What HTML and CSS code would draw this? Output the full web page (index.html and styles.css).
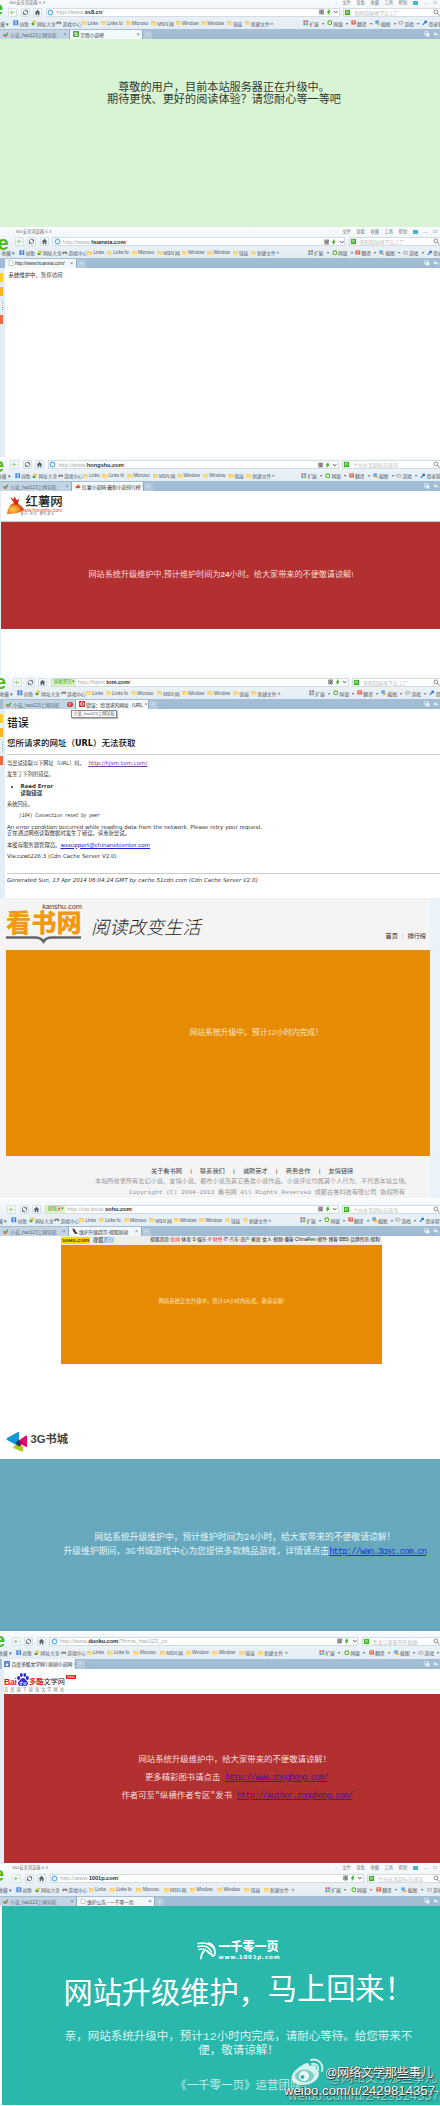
FILE: index.html
```html
<!DOCTYPE html>
<html>
<head>
<meta charset="utf-8">
<title>网站升级维护</title>
<link rel="stylesheet" href="styles.css">
</head>
<body>
<main class="page">

<section class="shot shot-xs8">
  <div class="chrome" data-key="xs8"></div>
  <div class="notice-green">
    <p>尊敬的用户，目前本站服务器正在升级中。</p>
    <p>期待更快、更好的阅读体验？请您耐心等一等吧</p>
  </div>
</section>

<section class="shot shot-huanxia">
  <div class="chrome" data-key="huanxia"></div>
  <div class="with-side">
    <aside class="side"><i class="s1"></i><i class="s2"></i><i class="s3"></i><i class="s4"></i></aside>
    <p class="plain">系统维护中，暂停访问</p>
  </div>
</section>

<section class="shot shot-hongshu">
  <div class="chrome" data-key="hongshu"></div>
  <div class="hs-body">
    <header class="hs-head">
      <svg class="hs-mark" viewBox="0 0 17 18">
        <defs><radialGradient id="yam" cx=".35" cy=".6" r=".7"><stop offset="0" stop-color="#ffd35a"/><stop offset=".5" stop-color="#f08a1c"/><stop offset="1" stop-color="#c81a10"/></radialGradient></defs>
        <path d="M0 17.500C1 10 5 6 9 7c4 1 6 3 8 6-4 4-10 5-17 4.500Z" fill="url(#yam)"/>
        <path d="M8 8 3 1l4 2L7 0l3 4 2-2-1 6Z" fill="#d8271c"/>
      </svg>
      <div class="hs-name">
        <b>红薯网</b>
        <span class="hs-url">www.hongshu.com</span>
        <span class="hs-sub">最 红 · 阅 读 · 最 新 最 全</span>
      </div>
    </header>
    <div class="hs-red"><p>网站系统升级维护中,预计维护时间为<b>24</b>小时。给大家带来的不便敬请谅解!</p></div>
  </div>
</section>

<section class="shot shot-tom">
  <div class="chrome" data-key="tom"></div>
  <div class="with-side">
    <aside class="side"><i class="s1"></i><i class="s2"></i><i class="s3"></i><i class="s4"></i></aside>
    <div class="err">
      <h1>错误</h1>
      <h2>您所请求的网址（<span>URL</span>）无法获取</h2>
      <hr>
      <p class="e1">当尝试读取以下网址（URL）时。 <a class="visited">http://hjsm.tom.com/</a></p>
      <p class="e2">发生了下列的错误。</p>
      <ul><li>Read Error<br>读取错误</li></ul>
      <p class="e3">系统回应。</p>
      <p class="reset">(104) Connection reset by peer</p>
      <p class="e4">An error condition occurred while reading data from the network. Please retry your request.<br><span class="cn">正在通过网络读取数据时发生了错误。请重新尝试。</span></p>
      <p class="e5"><span class="cn">本缓存服务器管理员。</span><a>wssupport@chinanetcenter.com</a></p>
      <p class="e6">Via:czwt226:3 (Cdn Cache Server V2.0)</p>
      <hr class="thin">
      <p class="gen">Generated Sun, 13 Apr 2014 06:04:24 GMT by cache.51cdn.com (Cdn Cache Server V2.0)</p>
    </div>
  </div>
  <span class="tip">小说_hao123上网导航</span>
</section>

<section class="shot shot-kanshu">
  <div class="ks-body">
    <header class="ks-head">
      <div class="ks-logo">
        <span class="ks-url">kanshu.com</span>
        <b>看书网</b>
        <svg viewBox="0 0 75 8"><path d="M0 1.500h29q6 0 8.500 4 2.500-4 8.500-4h29" fill="none" stroke="#666" stroke-width="2.600"/></svg>
      </div>
      <span class="ks-slogan">阅读改变生活</span>
      <nav><span>首页</span><i>|</i><span>排行榜</span></nav>
    </header>
    <div class="ks-orange"><p>网站系统升级中。预计12小时内完成！</p></div>
    <footer class="ks-foot">
      <div class="ks-links"><span>关于看书网</span><i>|</i><span>联系我们</span><i>|</i><span>诚聘英才</span><i>|</i><span>商务合作</span><i>|</i><span>友情链接</span></div>
      <p class="ks-legal">本站所收录所有玄幻小说、言情小说、都市小说及其它各类小说作品、小说评论均属其个人行为，不代表本站立场。</p>
      <p class="ks-copy">Copyright (C) 2004-2013 看书网 All Rights Reserved 成都古羌科技有限公司 版权所有</p>
    </footer>
  </div>
</section>

<section class="shot shot-sohu">
  <div class="chrome" data-key="sohu"></div>
  <div class="so-wrap">
    <div class="so-bar">
      <b class="so-logo">sᴏʜᴜ.com</b><span class="so-name">搜狐<em>原创</em></span>
      <span class="so-nav">搜狐首页·<em>新闻</em>·体育·S·娱乐·V·<em>财经</em>·IT·汽车·房产·家居·女人·视频·播客·ChinaRen·邮件·博客·BBS·品牌传讯·搜狗</span>
    </div>
    <div class="so-orange"><p>网站系统正在升级中。预计24小时内完成。敬请谅解!</p></div>
  </div>
</section>

<section class="shot shot-3g">
  <header class="g3-head">
    <svg viewBox="0 0 21 21">
      <path d="M1 7 12 1q1-.5 1 1v12q0 1.500-1 1L1 9q-1-1 0-2Z" fill="#1297d8"/>
      <path d="m12 10 8-5.500q1-.5 1 1V15q0 1.500-1 1l-8-4.500q-1-.8 0-1.500Z" fill="#e4086c"/>
      <path d="m7.500 15.500 4-2.500 5.500 2.500v4.500q-.3 1-1.200.6L7.600 17q-1-.8-.1-1.500Z" fill="#a9cf12"/>
      <path d="m9.500 11.500 3.500-3 .5 6-2 .5Z" fill="#173a7c"/>
      <path d="m13 9.500 3.500 2-2.500 4h-1Z" fill="#a0112d"/>
    </svg>
    <b>3G书城</b>
  </header>
  <div class="g3-teal">
    <p class="g3-a">网站系统升级维护中，预计维护时间为24小时，给大家带来的不便敬请谅解！</p>
    <p class="g3-b">升级维护期间，3G书城游戏中心为您提供多款精品游戏，详情请点击<a>http://wan.3gsc.com.cn</a></p>
  </div>
</section>

<section class="shot shot-duoku">
  <div class="chrome" data-key="duoku"></div>
  <div class="dk-body">
    <header class="dk-head">
      <div class="dk-logo">
        <b class="bai">Bai</b>
        <svg viewBox="0 0 12 13"><g fill="#2529d8"><ellipse cx="1.700" cy="5" rx="1.500" ry="1.900"/><ellipse cx="4.300" cy="2" rx="1.400" ry="1.900"/><ellipse cx="7.800" cy="2" rx="1.400" ry="1.900"/><ellipse cx="10.300" cy="5" rx="1.500" ry="1.900"/><path d="M6 5c2 0 2.500 2 4 3.200 2 1.800.8 4.600-1.500 4.600H3.500C1.200 12.800 0 10 2 8.200 3.500 7 4 5 6 5Z"/></g><path d="M4.800 7.800v3.500H3.200q-.8-1 0-1.800h1.600M7 9v2.300h2V9" fill="none" stroke="#fff" stroke-width=".8"/></svg>
        <b class="duo">多酷</b><span class="wen">文学网</span><span class="beta">beta</span>
      </div>
      <p class="dk-sub">百度旗下原创文学网站</p>
    </header>
    <div class="dk-red">
      <p class="d1">网站系统升级维护中，给大家带来的不便敬请谅解！</p>
      <p class="d2">更多精彩图书请点击 <a>http://www.zongheng.com/</a></p>
      <p class="d3">作者可至"纵横作者专区"发书 <a>http://author.zongheng.com/</a></p>
    </div>
  </div>
</section>

<section class="shot shot-1001p">
  <div class="chrome" data-key="p1001"></div>
  <div class="yi-body">
    <div class="yi-logo">
      <svg viewBox="0 0 19 18"><g fill="none" stroke="#fff" stroke-linecap="round"><path d="M1 1.500C8 0 15 2 17.500 8" stroke-width="1.500"/><path d="M1 4.500C7 3 12 5 14.500 10" stroke-width="1.500"/><path d="M2 7.500c4-1 8 0 10 4" stroke-width="1.300"/><path d="M12 1c4 1 7 6 5.500 12" stroke-width="1.800"/><path d="M7 9c-2 2-3 4-3 7.500" stroke-width="1.800"/><path d="M10 9c3 2 5 4 6 5" stroke-width="1.800"/></g></svg>
      <div><b>一千零一页</b><span>www.1001p.com</span></div>
    </div>
    <h3><span>网站升级维护，</span><span class="up">马上回来！</span></h3>
    <p class="yi-text">亲，网站系统升级中，预计12小时内完成，请耐心等待。给您带来不<br>便，敬请谅解！</p>
    <p class="yi-team">《一千零一页》运营团队</p>
  </div>
  <div class="mark">
    <svg viewBox="0 0 34 29"><path d="M10 8c5-4 9-4 8 0 6-2 8 0 7 3 5 3 3 9-1 12-7 6-20 5-23-1-2-5 4-11 9-14Z" fill="#fff" opacity=".8"/><ellipse cx="13.500" cy="18" rx="9.500" ry="6.500" fill="#7fcfc6"/><circle cx="13" cy="18" r="5" fill="#fff" opacity=".85"/><circle cx="11.500" cy="19" r="2" fill="#2bb7ac"/><path d="M20 2c7-2 13 4 11 11M21 6c4-1 7 2 6 6" fill="none" stroke="#fff" stroke-width="1.900" opacity=".8" stroke-linecap="round"/></svg>
    <span class="m-name ghost">@网络文学那些事儿</span>
    <span class="m-name">@网络文学那些事儿</span>
    <span class="m-url ghost">weibo.com/u/2429814357</span>
    <span class="m-url">weibo.com/u/2429814357</span>
  </div>
</section>

</main>
<script src="chrome.js"></script>
</body>
</html>
```

FILE: styles.css
```css
* { box-sizing: border-box; }
body { margin: 0; background: #fff; }
p, h1, h2, h3, ul { margin: 0; padding: 0; font-weight: normal; }
em, i { font-style: normal; }
.page {
  width: 440px; height: 2106px; overflow: hidden;
  font-family: "Liberation Sans", "Noto Sans CJK SC", sans-serif;
  color: #333;
}
.shot { position: relative; overflow: hidden; display: flex; flex-direction: column; white-space: nowrap; }
.shot > * { flex: none; }

/* browser chrome */
.chrome { position: relative; display: flex; flex-direction: column; overflow: hidden; background: linear-gradient(#fafcfd, #e9f1f6 45%, #dfe9f1); font-size: 4.5px; color: #56606a; }
.c-title { display: flex; justify-content: space-between; align-items: center; overflow: hidden; line-height: 6px; font-size: 4.3px; color: #777; padding-right: 3px; }
.c-title div { display: flex; align-items: center; gap: 5.5px; }
.c-title .skin { width: 5px; height: 4px; background: #3fb5dd; }
.c-nav { display: flex; align-items: center; height: 11px; }
.c-nav .btn { width: 9px; height: 9px; margin-right: 3.6px; border: .5px solid #d6e0e8; border-radius: 1px; background: #f6f9fb; display: grid; place-items: center; }
.c-nav svg { width: 7px; height: 7px; display: block; }
.c-addr { height: 9px; display: flex; align-items: center; background: #fff; border: .5px solid #d3dce3; font-size: 5.8px; line-height: 8px; color: #aaa; }
.c-addr > svg { margin: 0 2px 0 .5px; }
.c-addr b { color: #333; font-weight: bold; letter-spacing: -.1px; }
.c-addr .tools { margin-left: auto; display: flex; align-items: center; gap: 1.8px; }
.c-addr .tools svg { width: 5.5px; height: 6px; }
.c-addr .badge { align-self: stretch; background: #dcf3c4; color: #4f9b2c; font-size: 4.5px; display: flex; align-items: center; justify-content: space-between; padding: 0 2px; margin-right: 2px; }
.c-search { flex: 1; height: 9px; margin-left: 3.500px; display: flex; align-items: center; background: #fff; border: .5px solid #d3dce3; border-right: 0; font-size: 5px; color: #bbb; overflow: hidden; }
.c-search svg { flex: none; }
.c-search .lens { margin-left: auto; }
.c-bm { display: flex; align-items: center; overflow: hidden; font-size: 4.8px; letter-spacing: -.1px; }
.c-bm span { flex: none; display: flex; align-items: center; gap: .8px; overflow: visible; }
.c-bm svg { flex: none; width: 5.6px; height: 5.6px; }
.c-bm .drop::after { content: "▾"; margin-left: 2.500px; font-size: 4px; }
.c-tabs { display: flex; align-items: flex-end; background: linear-gradient(#a3bed5, #9fbbd1); height: 10px; }
.c-tab { height: 9.500px; flex: none; display: flex; align-items: center; gap: 1.5px; padding: 0 2.500px; background: #c3d5e3; color: #5e6c78; font-size: 4.9px; letter-spacing: -.15px; overflow: hidden; border-right: .5px solid #8fabc2; }
.c-tab.on { background: #f3f8fb; color: #333; }
.c-tab svg { flex: none; width: 6px; height: 6px; }
.c-tab u { margin-left: auto; text-decoration: none; color: #6887a3; font-size: 6px; }
.c-tab u.red { background: #d33; color: #fff; border-radius: 50%; width: 5.5px; height: 5.5px; font-size: 5px; line-height: 5px; text-align: center; }
.c-plus { width: 9px; height: 8.500px; background: #b4cadb; color: #dbe7f0; font-size: 7px; line-height: 8px; text-align: center; }
.c-ends { margin-left: auto; align-self: center; display: flex; gap: 3px; padding-right: 1px; }
.c-ends svg { width: 6px; height: 6px; }
.c-e { position: absolute; font: bold 20px/14px "Liberation Sans", sans-serif; color: #4fb81f; }

/* left tool strip */
.with-side { display: flex; flex: 1; }
.side { width: 4.500px; background: #e3edf5; display: flex; flex-direction: column; gap: 5px; padding-top: 5px; }
.side i { width: 3px; height: 9px; }
.side .s1 { background: #fccd2b; } .side .s2 { background: #fbb41d; }
.side .s3 { border-right: 1px dotted #5ab5e6; background: #fdeee8; } .side .s4 { background: #f06a45; }

.shot-xs8 { height: 227px; background: #d9f4d5; }
.notice-green { padding: 41.5px 0 0 8px; text-align: center; font-size: 11.15px; line-height: 12.800px; color: #2f3a2f; }

.shot-huanxia { height: 230px; background: #fff; }
.plain { font-size: 5.4px; line-height: 8px; padding: 2.500px 0 0 4px; }

.shot-hongshu { height: 217px; background: #fff; }
.hs-body { border-left: 1.500px solid #e3edf5; height: 183px; }
.hs-head { height: 30.500px; display: flex; padding: 5px 0 0 5.500px; border-bottom: 1px solid #c7d3dc; }
.hs-mark { width: 17px; height: 18.500px; }
.hs-name { display: flex; flex-direction: column; padding-left: 2px; width: 40px; }
.hs-name b { font-size: 12.400px; line-height: 12px; color: #222; font-weight: 500; }
.hs-url { font-size: 5px; line-height: 4.500px; color: #e8421c; margin-left: -5px; }
.hs-sub { font-size: 3px; line-height: 3px; color: #888; margin-left: -5px; }
.hs-red { height: 107px; background: #b33030; color: #f6dada; font-size: 8.120px; line-height: 12px; padding: 47.500px 0 0 87.500px; }

.shot-tom { height: 224px; background: #fff; }
.err { flex: 1; padding-left: 2.500px; font-family: "DejaVu Sans", "Noto Sans CJK SC", sans-serif; font-size: 5.570px; line-height: 6.300px; color: #333; }
.err p, .err li { height: auto; }
.err h1 { font-size: 10.800px; line-height: 14px; padding-top: 8px; font-weight: 500; color: #111; }
.err h2 { font-size: 8.500px; line-height: 10px; padding-top: 7px; height: 22.500px; font-weight: 500; color: #111; }
.err h2 span { font-weight: bold; font-size: 8.100px; }
.err hr { margin: 0; border: 0; height: 1.200px; background: #ccc; }
.err a { color: #22c; text-decoration: underline; }
.err a.visited { color: #7a3aa5; font-size: 5.600px; margin-left: 2px; }
.err .cn { font-size: 5.350px; }
.e1 { padding-top: 5.500px; font-size: 5.200px; } .e2 { padding-top: 5px; font-size: 5.200px; }
.err ul { padding: 5.500px 0 0 13.500px; font-size: 5.400px; font-weight: bold; }
.e3 { padding-top: 5px; font-size: 5.200px; }
.reset { padding: 5.500px 0 0 12px; font: italic 4.500px/6.300px "Liberation Mono", monospace; }
.e4 { padding-top: 5px; } .e5 { padding-top: 5px; } .e6 { padding-top: 5px; }
.err .thin { margin-top: 13.500px; height: .8px; }
.gen { font-style: italic; padding-top: 3.500px; }
.tip { position: absolute; left: 71px; top: 36px; width: 46px; height: 8px; border: 1px solid #888; background: #fff; font-size: 4.200px; line-height: 6px; text-align: center; color: #555; box-shadow: 1px 1px 1px #bbb; }

.shot-kanshu { height: 301px; background: #fff; }
.ks-body { height: 300px; background: #f4f4f4; border-right: 10px solid #eaf2fa; padding-left: 6px; }
.ks-head { height: 51.500px; display: flex; }
.ks-logo { width: 76px; display: flex; flex-direction: column; }
.ks-url { font-size: 7.400px; line-height: 8px; text-align: right; padding: 5px 0 0; color: #444; }
.ks-logo b { font-size: 25.200px; line-height: 24px; height: 24.500px; color: #f39812; font-weight: 900; }
.ks-logo svg { width: 75px; height: 8px; }
.ks-slogan { padding: 18px 0 0 9px; font-size: 18.300px; line-height: 24px; font-style: italic; font-weight: 300; color: #222; }
.ks-head nav { margin-left: auto; display: flex; gap: 4px; padding: 34px 4px 0 0; font-size: 6.200px; line-height: 8px; color: #222; }
.ks-head nav i { color: #bbb; }
.ks-orange { height: 206.500px; background: #e88b04; color: #fbe6c4; font-size: 7.800px; line-height: 10px; padding: 78px 0 0 183.500px; }
.ks-foot { padding-top: 11px; font-family: "Liberation Mono", "Noto Sans CJK SC", monospace; color: #999; font-size: 6.200px; line-height: 10.300px; }
.ks-links { display: flex; padding-left: 145px; gap: 7.200px; color: #444; }
.ks-legal { padding-left: 89px; }
.ks-copy { padding-left: 123px; }

.shot-sohu { height: 232px; background: #fff; }
.so-wrap { width: 321px; margin-left: 61px; }
.so-bar { height: 8.500px; display: flex; align-items: center; background: #ededed; line-height: 8px; color: #222; }
.so-logo { width: 29px; height: 7.500px; background: #ffd800; font-size: 5.800px; line-height: 7.500px; color: #443a00; text-align: center; }
.so-name { font-size: 5.200px; padding-left: 3px; }
.so-name em { color: #2491d0; }
.so-nav { margin-left: auto; padding-right: 2px; font-size: 4.700px; }
.so-nav em { color: #e22; }
.so-orange { height: 119.500px; background: #e88b04; color: #fbe3bd; font-size: 5.400px; line-height: 8px; padding-top: 52px; text-align: center; }

.shot-3g { height: 200px; background: #fff; }
.g3-head { height: 28px; display: flex; align-items: flex-start; padding-left: 6px; gap: 3.500px; }
.g3-head svg { width: 21px; height: 21px; }
.g3-head b { font-size: 11.300px; line-height: 17px; color: #444; }
.g3-teal { height: 171.500px; background: #66a9bf; color: #e3f3f6; padding-top: 72px; font-family: "Liberation Mono", "Noto Sans CJK SC", monospace; font-size: 8.800px; line-height: 14px; }
.g3-a { padding-left: 94.500px; }
.g3-b { padding-left: 63.500px; }
.g3-teal a { color: #1a2fe0; text-decoration: underline; letter-spacing: -.87px; }

.shot-duoku { height: 233px; background: #fff; }
.dk-body { border-left: 4.500px solid #e3ecf8; height: 195px; }
.dk-head { height: 25px; padding-top: 4px; }
.dk-logo { display: flex; height: 14px; align-items: flex-end; }
.dk-logo svg { width: 12px; height: 13px; margin-bottom: 1px; }
.bai { font-size: 8.600px; line-height: 10px; color: #e0201b; width: 13px; font-weight: bold; letter-spacing: -.3px; }
.duo { font-size: 7.200px; line-height: 10px; color: #e0201b; }
.wen { font-size: 7.200px; line-height: 10px; color: #222; }
.beta { align-self: flex-start; background: #e8201b; color: #fff; font-size: 3.600px; line-height: 4px; padding: 0 1.500px; margin: 2px 0 0 1px; width: 10px; }
.dk-sub { font-size: 4.200px; letter-spacing: 2px; line-height: 6px; padding-top: .5px; color: #777; }
.dk-red { height: 169.500px; background: #b33030; color: #f6dede; padding-top: 57px; font-family: "Liberation Mono", "Noto Sans CJK SC", monospace; font-size: 8.400px; line-height: 18.200px; }
.d1 { padding-left: 134.500px; } .d2 { padding-left: 141px; } .d3 { padding-left: 117.500px; }
.dk-red a { color: #4a12a8; text-decoration: underline; letter-spacing: -.76px; }

.shot-1001p { height: 242px; background: #fff; }
.yi-body { height: 199px; margin-left: 2px; background: #2bb8ac; color: #fff; font-family: "Liberation Mono", "Noto Sans CJK SC", monospace; }
.yi-logo { display: flex; justify-content: flex-start; padding: 36px 0 0 195px; height: 56px; gap: 2.500px; }
.yi-logo svg { width: 19px; height: 18px; }
.yi-logo div { display: flex; flex-direction: column; }
.yi-logo b { font-size: 12px; line-height: 13px; font-weight: 900; }
.yi-logo span { font: bold 5.600px/5px "DejaVu Sans", sans-serif; letter-spacing: .75px; }
.yi-body h3 { display: flex; padding: 14px 0 0 61.500px; font-size: 29.200px; line-height: 40px; height: 66px; }
.yi-body h3 .up { margin-top: -4px; }
.yi-text { font-size: 11.500px; line-height: 13.800px; text-align: center; padding: 2px 0 0 39px; width: 434px; color: #d9f4f0; }
.yi-team { font-size: 11.500px; line-height: 14px; padding: 21px 0 0 173px; color: #c5ece7; }
.mark { position: absolute; right: 0; bottom: 0; width: 160px; height: 52px; font-family: "Liberation Sans", "Noto Sans CJK SC", sans-serif; }
.mark svg { position: absolute; left: 11px; top: 4px; width: 34px; height: 29px; }
.mark span { position: absolute; color: #fff; text-shadow: .8px .8px 1px #222, 0 0 1px #333; }
.m-name { left: 45px; top: 11px; font-size: 12.200px; line-height: 16px; letter-spacing: -.25px; }
.m-url { left: 4px; top: 28px; font-size: 13.200px; line-height: 18px; }
.mark .ghost { transform: translate(4px, 5px); opacity: .5; }
```

FILE: chrome.js
```js
const icons = {
  back: '<svg viewBox="0 0 8 8"><path d="M6.500 4H2M4 1.800 1.800 4 4 6.200" fill="none" stroke="#a5d893" stroke-width="1.400"/></svg>',
  reload: '<svg viewBox="0 0 8 8"><path d="M1.500 4.500A2.500 2.500 0 0 1 6 2.500M6.500 3.500A2.500 2.500 0 0 1 2 5.500" fill="none" stroke="#5d6b76" stroke-width="1"/><path d="M6.800 1v2.400H4.500zM1.200 7V4.600h2.300z" fill="#5d6b76"/></svg>',
  home: '<svg viewBox="0 0 8 8"><path d="M4 .8.8 4h1v3.200h1.700V5h1v2.200h1.700V4h1z" fill="#55636f"/></svg>',
  globe: '<svg viewBox="0 0 8 8"><circle cx="4" cy="4" r="2.600" fill="#fff" stroke="#6db9ea" stroke-width="1.600"/></svg>',
  qr: '<svg viewBox="0 0 8 8"><path d="M1 1h2.500v2.500H1zM4.500 1H7v2.500H4.500zM1 4.500h2.500V7H1zM4.500 4.500h1v1h1V7h-2z" fill="none" stroke="#444" stroke-width=".9"/></svg>',
  bolt: '<svg viewBox="0 0 8 8"><path d="M4.500.5 2 4.500h1.500L3 7.500l3-4H4.500z" fill="#35b51e" stroke="#35b51e"/></svg>',
  caret: '<svg viewBox="0 0 8 8"><path d="m1.500 2.500 2.500 3 2.500-3" fill="none" stroke="#556" stroke-width="1.300"/></svg>',
  find: '<svg viewBox="0 0 8 8"><path d="M1 1h6v6H1z" fill="#3bb11d"/><circle cx="3.800" cy="3.700" r="1.300" fill="none" stroke="#fff" stroke-width=".7"/></svg>',
  lens: '<svg viewBox="0 0 8 8"><circle cx="3.300" cy="3.300" r="2.200" fill="none" stroke="#666" stroke-width=".8"/><path d="m5 5 2.300 2.300" stroke="#666"/></svg>',
  google: '<svg viewBox="0 0 8 8"><path d="M.5.5h7v7h-7z" fill="#3b7de0"/><circle cx="4" cy="2.800" r="1.200" fill="none" stroke="#fff" stroke-width=".8"/><path d="M5 4.200c-3 .3-3 2.300-1 2.300s2-1.300 0-1.800" fill="none" stroke="#fff" stroke-width=".7"/></svg>',
  hao: '<svg viewBox="0 0 8 8"><circle cx="4.500" cy="3" r="2.400" fill="#f4b81d"/><circle cx="3" cy="5.300" r="2.200" fill="#38a12b"/><circle cx="4" cy="4" r="1" fill="#fff"/></svg>',
  game: '<svg viewBox="0 0 8 8"><path d="M1 2.500h6L7.500 6H6L5 4.800H3L2 6H.5z" fill="#777"/><circle cx="2.500" cy="3.700" r=".6" fill="#e33"/></svg>',
  folder: '<svg viewBox="0 0 8 8"><path d="M.3 1.300h3l.7 1h3.700v4.900H.3z" fill="#f4c65a"/><path d="M.3 3.300h7.400v3.900H.3z" fill="#fbdc8b"/></svg>',
  ext: '<svg viewBox="0 0 8 8"><path d="M.5.5h3v3h-3z" fill="#e65b45"/><path d="M4.500.5h3v3h-3z" fill="#6a7de0"/><path d="M.5 4.500h3v3h-3z" fill="#4c8fe0"/><path d="M4.500 4.500h3v3h-3z" fill="#7cc04a"/></svg>',
  bank: '<svg viewBox="0 0 8 8"><circle cx="4" cy="4" r="2.700" fill="#fff" stroke="#5ab52e" stroke-width="1.600"/></svg>',
  trans: '<svg viewBox="0 0 8 8"><path d="M.5.5h7v6h-7z" fill="#e2604a"/><path d="M2 2.500h4M4 2.500v3" stroke="#fff" stroke-width=".8"/></svg>',
  snap: '<svg viewBox="0 0 8 8"><path d="M.5.5h5v5h-5z" fill="#5aa9e6"/><path d="M3 4h4.500v3.500H3z" fill="#f0b55b"/></svg>',
  pad: '<svg viewBox="0 0 8 8"><rect x=".8" y="2" width="6.400" height="4" rx="1.500" fill="none" stroke="#999" stroke-width=".9"/><path d="M2.500 3v2M5 4h1" stroke="#999"/></svg>',
  key: '<svg viewBox="0 0 8 8"><circle cx="5.300" cy="2.700" r="2" fill="#2b7ad8"/><path d="M4.500 3.500 1 7" stroke="#2b7ad8" stroke-width="1.600"/></svg>',
  leaf: '<svg viewBox="0 0 8 8"><path d="M.5 3.500 3 5 7.500.5 5.500 6H.5z" fill="#3fa43b"/><path d="M.5 6h5v1.500h-5z" fill="#e0523a"/></svg>',
  green: '<svg viewBox="0 0 8 8"><path d="M0 0h8v8H0z" fill="#4cb037"/><path d="M5.500 2.500h-3v1.700h3v1.800h-3" fill="none" stroke="#fff"/></svg>',
  doc: '<svg viewBox="0 0 8 8"><path d="M1.500.5h3.300L6.700 2.500v5H1.500z" fill="#fff" stroke="#999" stroke-width=".7"/></svg>',
  yam: '<svg viewBox="0 0 8 8"><path d="M.5 7C1 4 3 2.500 4 3l-.5-2L5 3c1.500.7 2 2 2.500 3-2 1.300-4 1.300-7 1z" fill="#e35a1c"/></svg>',
  err: '<svg viewBox="0 0 8 8"><path d="M0 0h8v8H0z" fill="#cc3a35"/><circle cx="4" cy="4" r="2" fill="none" stroke="#fff"/></svg>',
  fox: '<svg viewBox="0 0 8 8"><path d="M.5.5 4 2l1 3 3 2.500H4L1.500 4z" fill="#222"/><path d="M.5.5 3.500 2 4 5z" fill="#d22"/></svg>',
  paw: '<svg viewBox="0 0 8 8"><path d="M0 0h8v8H0z" fill="#5580cc"/><circle cx="4" cy="5" r="1.700" fill="#fff"/><path d="M2 2.500h1M5 2.500h1" stroke="#fff"/></svg>',
  tabs: '<svg viewBox="0 0 8 8"><path d="M.8.8h4.500v4.500H.8z" fill="none" stroke="#e8f1f8"/><path d="M2.800 2.800h4.500v4.500H2.800z" fill="#e8f1f8"/></svg>',
  undo: '<svg viewBox="0 0 8 8"><path d="M3.500 1v2c3 0 4 1.500 4 4-1-1.500-2-2-4-2v1.700L.5 4z" fill="#e8f1f8"/></svg>'
};

// Per-window measurements in pixels: nav/addr for the address row, off/u/right for the bookmark row.
const windows = {
  xs8: { e: [-8, 1], nav: 8, off: 0, u: 1, right: 303, title: 6.5, bm: 11.5, titleX: 9, addr: 294,
    url: ['http://www.', 'xs8.cn', '/'], find: '贵阳隐秘地下兵工厂',
    tabs: [[70, 'leaf', '小说_hao123上网导航'], [73, 'green', '言情小说吧', 1]] },
  huanxia: { e: [-2.5, 9], nav: 14.5, off: 6, u: 1, right: 307.5, title: 9, bm: 11, titleX: 15.5, addr: 293,
    url: ['http://www.', 'huanxia.com', '/'], find: '贵阳隐秘地下兵工厂', lead: 5,
    tabs: [[71.5, 'doc', 'http://www.huanxia.com/', 1]] },
  hongshu: { e: [-7, 1], nav: 10, off: 1.5, u: 1, right: 301, title: 2, bm: 11, addr: 291,
    url: ['http://www.', 'hongshu.com', '/'], find: '兰州水苯超标自流沟',
    tabs: [[72, 'leaf', '小说_hao123上网导航'], [71.5, 'yam', '红薯小说网-最新小说排行榜', 1]] },
  tom: { e: [-5, 1], nav: 13, off: 4, u: 1.012, right: 309, title: 2.5, bm: 11.5, addr: 298, badge: '国家资讯',
    url: ['http://hjsm.', 'tom.com', '/'], find: '贵阳隐秘地下兵工厂', lead: 3,
    tabs: [[73, 'leaf', '小说_hao123上网导航', 0, 1], [72.5, 'err', '错误：您请求的网址（URL', 1]] },
  sohu: { e: [-11, -2], nav: 7, off: -2, u: 1, right: 300, title: 4.5, bm: 11.5, addr: 294, badge: '搜狐 <em style="color:#e33">▣</em>',
    url: ['http://vip.book.', 'sohu.com', '/'], find: '兰州水苯超标自流沟',
    tabs: [[69, 'leaf', '小说_hao123上网导航'], [72.5, 'fox', '维护升级提示-搜狐原创', 1]] },
  duoku: { e: [-6, 2], nav: 11.5, off: 2.3, u: 1.045, right: 319, title: 4.5, bm: 12, addr: 309,
    url: ['http://www.', 'duoku.com', '/?fr=xs_hao123_yc'], find: '黑龙江旅客列车脱线', lead: 1.5,
    tabs: [[74.5, 'paw', '百度多酷文学网 | 原创小说网', 1]] },
  p1001: { e: [-7, 3], nav: 12, off: 2, u: 1.07, right: 325, title: 8.5, bm: 12.5, titleX: 12, addr: 314,
    url: ['http://www.', '1001p.com', '/'], find: '兰州水苯超标自流沟',
    tabs: [[77, 'leaf', '小说_hao123上网导航'], [78, 'doc', '维护公告 - 一千零一页', 1]] }
};

const bookmarks = [[17.5, 'google', '谷歌'], [25.5, 'hao', '网址大全'], [25, 'game', '游戏中心'], [19.5, 'folder', 'Links'],
  [25, 'folder', 'Links fo'], [25.5, 'folder', 'Microso'], [24.5, 'folder', 'MSN 网'], [25.5, 'folder', 'Window'],
  [25.5, 'folder', 'Window'], [18, 'folder', '链接'], [26, 'folder', '新建文件'], [5, '', '»']];
const tools = [[24, 'ext', '扩展', 1], [23.5, 'bank', '网银', 1], [24, 'trans', '翻译', 1], [23.5, 'snap', '截图', 1], [24, 'pad', '游戏', 1], [30, 'key', '登录管家']];

const item = u => ([w, icon, text, drop]) =>
  `<span class="${drop ? 'drop' : ''}" style="width:${w * u}px">${icons[icon] || ''}${text}</span>`;

document.querySelectorAll('.chrome').forEach(el => {
  const c = windows[el.dataset.key];
  const start = 13 * c.u + c.off;
  const used = bookmarks.reduce((s, b) => s + b[0], 0) * c.u;
  el.innerHTML = `
    <div class="c-title" style="height:${c.title}px;padding-left:${c.titleX || 0}px">${c.titleX ? '<div>360安全浏览器 6.3</div><div><span>▫</span><span>文件</span><span>查看</span><span>收藏</span><span>工具</span><span>帮助</span><span class="skin"></span><span>—</span><span>❐</span></div>' : ''}</div>
    <div class="c-nav" style="padding-left:${c.nav}px">
      <span class="btn">${icons.back}</span><span class="btn">${icons.reload}</span><span class="btn">${icons.home}</span>
      <div class="c-addr" style="width:${c.addr}px">${c.badge ? `<span class="badge" style="width:${c.badge.length > 4 ? 19.5 : 24}px">${c.badge}<span>▾</span></span>` : icons.globe}<span>${c.url[0]}<b>${c.url[1]}</b>${c.url[2]}</span><span class="tools">${icons.qr}${icons.bolt}${icons.caret}</span></div>
      <div class="c-search">${icons.find}<span>. ${c.find}</span><span class="lens">${icons.lens}</span></div>
    </div>
    <div class="c-bm" style="height:${c.bm}px"><span style="width:${start}px;justify-content:flex-end;padding-right:4px">收藏 ▾</span>${bookmarks.map(item(c.u)).join('')}<span style="width:${c.right - start - used}px"></span>${tools.map(item(c.u)).join('')}</div>
    <div class="c-tabs" style="padding-left:${c.lead || 0}px">${c.tabs.map(([w, i, t, on, red]) => `<div class="c-tab ${on ? 'on' : ''}" style="width:${w}px">${icons[i]}<span>${t}</span><u class="${red ? 'red' : ''}">×</u></div>`).join('')}<span class="c-plus">+</span><div class="c-ends">${icons.tabs}${icons.undo}</div></div>
    <span class="c-e" style="left:${c.e[0]}px;top:${c.e[1]}px">e</span>`;
});
```
